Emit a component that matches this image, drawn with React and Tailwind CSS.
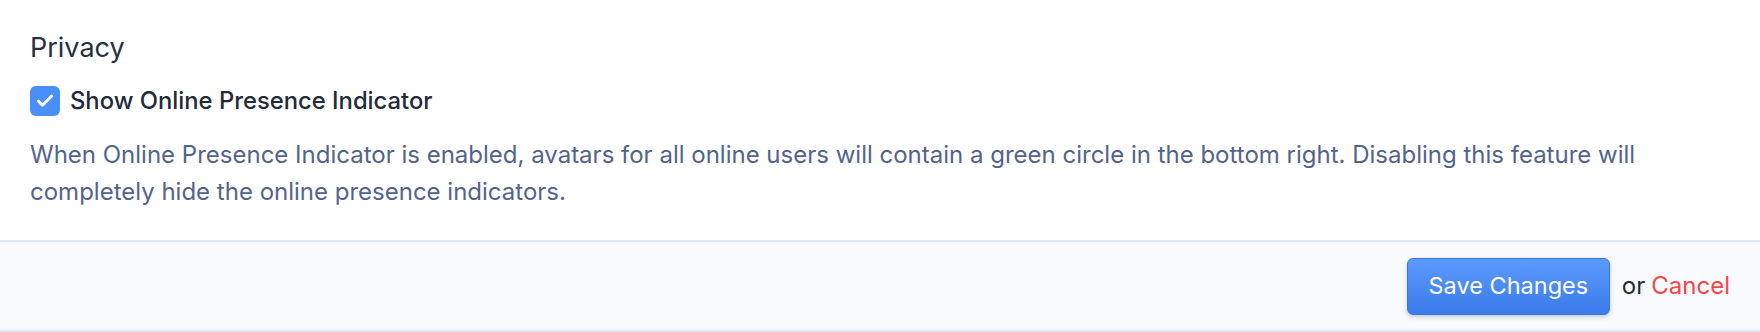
import { Check } from 'lucide-react';

const App = () => {
  return (
    <div className="w-[1760px] h-[332px] bg-white font-['Inter','Liberation_Sans',sans-serif] overflow-hidden">
      {/* Privacy section */}
      <div className="h-[240px] px-[30px] pt-[31px]">
        <h3 className="text-[27px] leading-[34px] text-[#273043]">Privacy</h3>

        <label className="mt-[21px] h-[30px] flex items-center gap-[10px]">
          <span className="w-[30px] h-[30px] rounded-[6px] bg-[#4a8ef7] flex items-center justify-center">
            <Check className="w-[20px] h-[20px] text-white" strokeWidth={3.5} />
          </span>
          <span className="text-[23.8px] leading-[30px] font-[550] text-[#232a3a]">Show Online Presence Indicator</span>
        </label>

        <p className="mt-[20px] text-[24px] leading-[37px] text-[#52648c]">
          When Online Presence Indicator is enabled, avatars for all online users will contain a green circle in the bottom right. Disabling this feature will
          <br />
          completely hide the online presence indicators.
        </p>
      </div>

      {/* Footer */}
      <div className="h-[92px] border-y-2 border-[#dde7f5] bg-[#f8fafe] px-[30px] flex items-center justify-end">
        <button className="h-[57px] w-[203px] rounded-[6px] border border-[#3a78e0] bg-gradient-to-b from-[#5c9bfc] to-[#3a7aea] text-white text-[23.5px] shadow-[0_2px_4px_rgba(40,60,100,0.25)]">
          Save Changes
        </button>
        <span className="ml-[12px] text-[24px] text-[#232a3a]">or</span>
        <a className="ml-[6px] text-[24px] text-[#f04848]">Cancel</a>
      </div>
    </div>
  );
};

export default App;
